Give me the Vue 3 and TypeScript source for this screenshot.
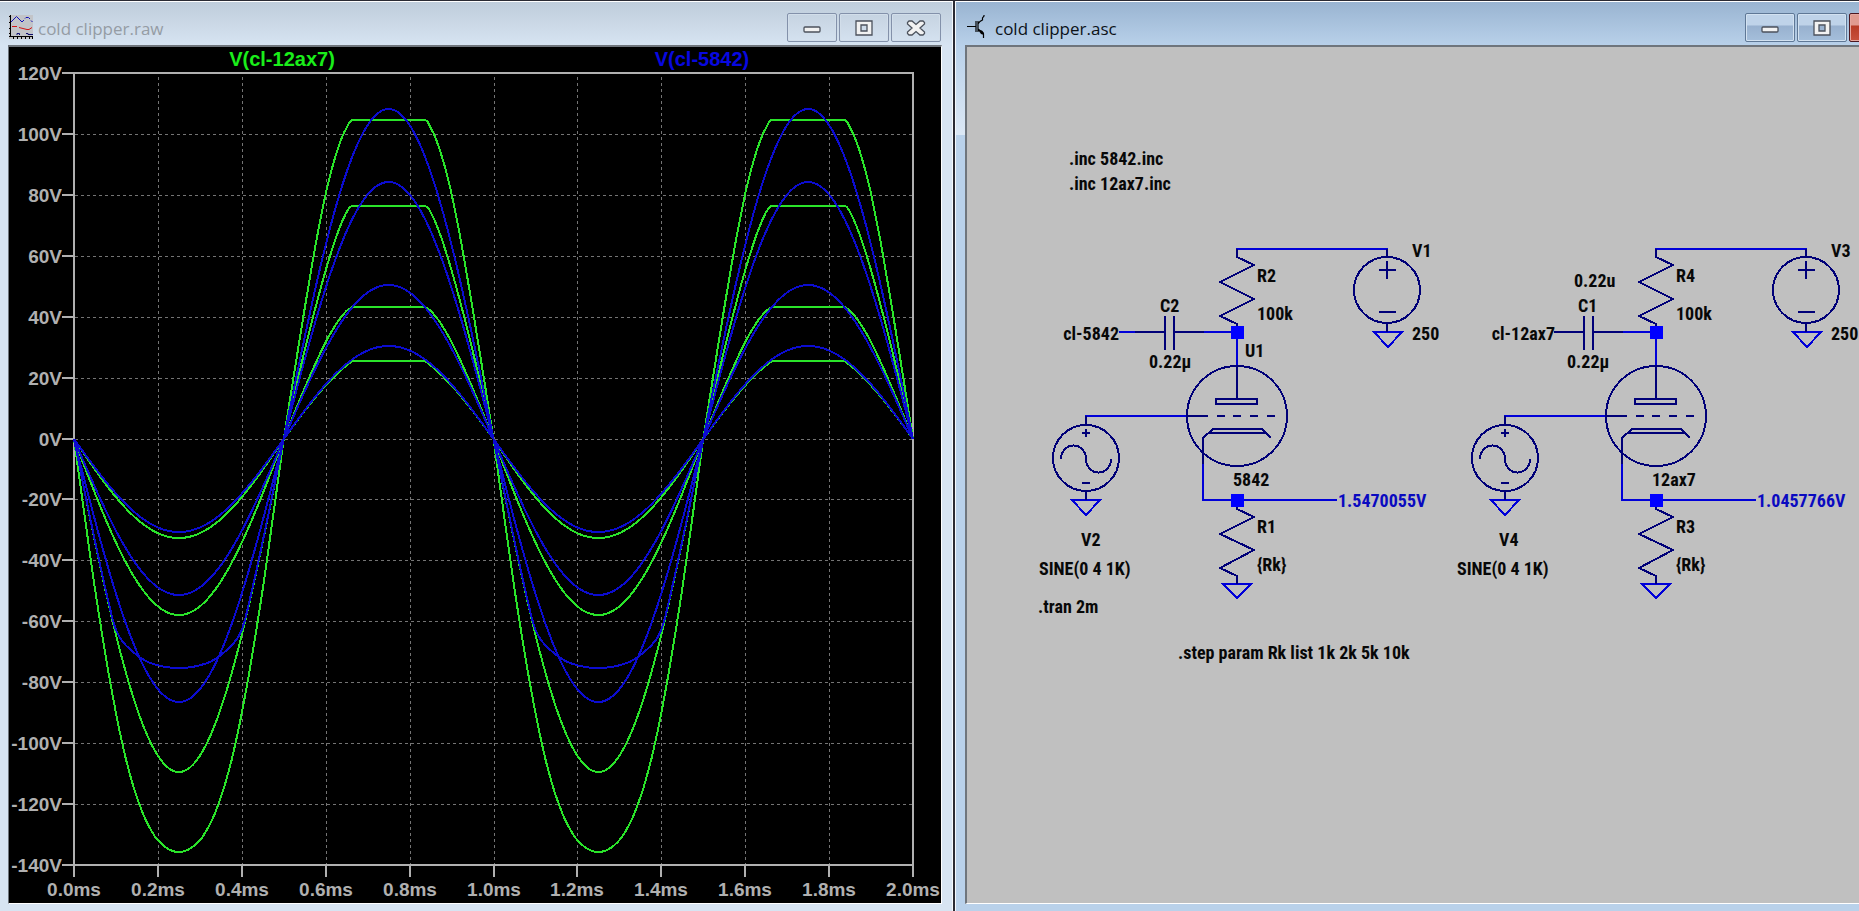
<script setup lang="ts">
type Knee = [number, number][]

interface Trace {
  net: 'triode' | 'pentode'
  positive: Knee
  negative: Knee
}

interface Label {
  text: string
  x: number
  y: number
  anchor?: 'start' | 'middle' | 'end'
}

interface Stage {
  id: string
  offset: number
  wireStart: number
  bias: string
  labels: Label[]
}

const plot = { left: 74, right: 913, top: 73, bottom: 865, zero: 439 }
const period = (plot.right - plot.left) / 2

// Each knee lists [ideal, actual] swing in plot units; the first ideal/actual
// slope holds from the origin and the last point is the full-scale swing.
const traces: Trace[] = [
  { net: 'triode', positive: [[78, 78], [91, 78]], negative: [[99, 99]] },
  { net: 'triode', positive: [[100, 100], [120, 118], [133, 128], [141, 132], [165, 132]], negative: [[176, 176]] },
  { net: 'triode', positive: [[172, 172], [205, 204], [222, 219], [232, 227], [240, 232], [245, 233], [287, 233]], negative: [[333, 333]] },
  {
    net: 'triode',
    positive: [[200, 199], [255, 250], [280, 270], [303, 287], [318, 297], [331, 305], [345, 312], [354, 317], [362, 319], [425, 319]],
    negative: [[150, 150], [200, 197], [240, 234], [275, 265], [300, 287], [340, 320], [380, 350], [420, 377], [455, 398], [485, 413]],
  },
  { net: 'pentode', positive: [[93, 93]], negative: [[93, 93]] },
  { net: 'pentode', positive: [[154, 154]], negative: [[156, 156]] },
  { net: 'pentode', positive: [[257, 257]], negative: [[263, 263]] },
  {
    net: 'pentode',
    positive: [[330, 330]],
    negative: [[180, 180], [194, 191], [210, 199], [230, 206], [252, 212], [274, 218], [295, 223], [312, 226], [330, 229]],
  },
]

function shape(value: number, knee: Knee): number {
  let previous: [number, number] = [0, 0]
  for (const point of knee) {
    if (value <= point[0]) {
      const share = (value - previous[0]) / (point[0] - previous[0])
      return previous[1] + share * (point[1] - previous[1])
    }
    previous = point
  }
  return previous[1]
}

function tracePoints(trace: Trace): string {
  const points: string[] = []
  for (let x = plot.left; x <= plot.right; x += 1) {
    const sine = -Math.sin(((x - plot.left) / period) * Math.PI * 2)
    const knee = sine >= 0 ? trace.positive : trace.negative
    const full = knee[knee.length - 1][0]
    const swing = shape(Math.abs(sine) * full, knee)
    const y = plot.zero - Math.sign(sine) * swing
    points.push(`${x},${y.toFixed(1)}`)
  }
  return points.join(' ')
}

const timeTicks = Array.from({ length: 11 }, (_, i) => ({
  text: `${(i * 0.2).toFixed(1)}ms`,
  x: Math.round(plot.left + (i * (plot.right - plot.left)) / 10),
}))

const voltTicks = Array.from({ length: 14 }, (_, i) => ({
  text: `${120 - i * 20}V`,
  y: Math.round(plot.top + (i * (plot.bottom - plot.top)) / 13),
}))

const directives: Label[] = [
  { text: '.inc 5842.inc', x: 1069, y: 165 },
  { text: '.inc 12ax7.inc', x: 1069, y: 190 },
  { text: '.tran 2m', x: 1038, y: 613 },
  { text: '.step param Rk list 1k 2k 5k 10k', x: 1178, y: 659 },
]

const stages: Stage[] = [
  {
    id: '5842',
    offset: 0,
    wireStart: 1119,
    bias: '1.5470055V',
    labels: [
      { text: 'V1', x: 1412, y: 257 },
      { text: 'R2', x: 1257, y: 282 },
      { text: '100k', x: 1257, y: 320 },
      { text: 'C2', x: 1160, y: 312 },
      { text: 'cl-5842', x: 1119, y: 340, anchor: 'end' },
      { text: '0.22µ', x: 1149, y: 368 },
      { text: 'U1', x: 1245, y: 357 },
      { text: '5842', x: 1233, y: 486 },
      { text: 'R1', x: 1257, y: 533 },
      { text: '{Rk}', x: 1257, y: 571 },
      { text: 'V2', x: 1081, y: 546 },
      { text: 'SINE(0 4 1K)', x: 1039, y: 575 },
      { text: '250', x: 1412, y: 340 },
    ],
  },
  {
    id: '12ax7',
    offset: 419,
    wireStart: 1136,
    bias: '1.0457766V',
    labels: [
      { text: 'V3', x: 1412, y: 257 },
      { text: 'R4', x: 1257, y: 282 },
      { text: '100k', x: 1257, y: 320 },
      { text: '0.22u', x: 1155, y: 287 },
      { text: 'C1', x: 1159, y: 312 },
      { text: 'cl-12ax7', x: 1136, y: 340, anchor: 'end' },
      { text: '0.22µ', x: 1148, y: 368 },
      { text: '12ax7', x: 1233, y: 486 },
      { text: 'R3', x: 1257, y: 533 },
      { text: '{Rk}', x: 1257, y: 571 },
      { text: 'V4', x: 1080, y: 546 },
      { text: 'SINE(0 4 1K)', x: 1038, y: 575 },
      { text: '250', x: 1412, y: 340 },
    ],
  },
]
</script>

<template>
  <main class="desktop">
    <section class="window inactive" aria-labelledby="raw-title">
      <header class="titlebar">
        <svg class="app-icon" viewBox="0 0 24 24" aria-hidden="true">
          <rect width="24" height="24" fill="#c2c4c8" />
          <path d="M1.5 0V22M0 21.5H24M0 1.5H2M0 7.5H2M0 13.5H2M0 18.5H2M4.5 22V24M8.5 22V24M12.5 22V24M16.5 22V24M20.5 22V24M23.5 22V24" stroke="#000" stroke-width="1" fill="none" />
          <path d="M2 7L7.500 1.500L13 7L15 5M16 3.500L17 2.500H19.500L21 4M22 5.500L23.500 7" stroke="#1010b8" stroke-width="1" fill="none" />
          <path d="M3 11.500H8M10 12.500L14 13.500L18 14.500H20L23 12.500" stroke="#d01818" stroke-width="1" fill="none" />
          <path d="M8 20V18.500H10.500V20M17 18.500H19V19.500H24" stroke="#101070" stroke-width="1" fill="none" />
        </svg>
        <h1 id="raw-title" class="title">cold clipper.raw</h1>
        <div class="controls">
          <button type="button" aria-label="Minimize">
            <svg viewBox="0 0 20 18"><rect x="2" y="8" width="16" height="5" rx="1" class="glyph" /></svg>
          </button>
          <button type="button" aria-label="Maximize">
            <svg viewBox="0 0 20 18"><path d="M2 2H18V16H2ZM7 6V12H13V6Z" fill-rule="evenodd" class="glyph" /></svg>
          </button>
          <button type="button" aria-label="Close">
            <svg viewBox="0 0 20 18"><path d="M3 2H6L10 5.500L14 2H17L18.500 3.500V5L14 9L18.500 13V14.500L17 16H14L10 12.500L6 16H3L1.500 14.500V13L6 9L1.500 5V3.500Z" class="glyph" /></svg>
          </button>
        </div>
      </header>
      <div class="client plot">
        <svg class="canvas" viewBox="9 47 932 856" preserveAspectRatio="xMinYMin meet" role="img" aria-label="Waveform plot">
          <g class="grid">
            <path v-for="tick in timeTicks.slice(1, -1)" :key="tick.text" :d="`M${tick.x}.5 77V864`" />
            <path v-for="tick in voltTicks.slice(1, -1)" :key="tick.text" :d="`M75 ${tick.y}.5H912`" />
          </g>
          <g class="axis">
            <rect :x="plot.left" :y="plot.top" :width="plot.right - plot.left" :height="plot.bottom - plot.top" />
            <path v-for="tick in voltTicks" :key="tick.text" :d="`M62 ${tick.y}H74`" />
            <path v-for="tick in timeTicks" :key="tick.text" :d="`M${tick.x} 865V877`" />
          </g>
          <polyline v-for="(trace, i) in traces" :key="i" :class="['trace', trace.net]" :points="tracePoints(trace)" />
          <g class="axis-text">
            <text v-for="tick in voltTicks" :key="tick.text" x="62" :y="tick.y + 7" text-anchor="end">{{ tick.text }}</text>
            <text v-for="tick in timeTicks" :key="tick.text" :x="tick.x" y="896" text-anchor="middle">{{ tick.text }}</text>
          </g>
          <text class="net-name triode" x="282" y="66" text-anchor="middle">V(cl-12ax7)</text>
          <text class="net-name pentode" x="702" y="66" text-anchor="middle">V(cl-5842)</text>
        </svg>
      </div>
    </section>

    <section class="window active" aria-labelledby="asc-title">
      <header class="titlebar">
        <svg class="app-icon" viewBox="0 0 24 24" aria-hidden="true">
          <path d="M1 11.500H10M10 6V17M12 6V17M12 9L14 6.500L16.500 5V3L18 1V0M12 14L16 17L17.500 19V23" stroke="#000" stroke-width="1.200" fill="none" />
          <path d="M12.500 15.500H16L18 18V20L15 19Z" fill="#000" />
        </svg>
        <h2 id="asc-title" class="title">cold clipper.asc</h2>
        <div class="controls">
          <button type="button" aria-label="Minimize">
            <svg viewBox="0 0 20 18"><rect x="2" y="8" width="16" height="5" rx="1" class="glyph" /></svg>
          </button>
          <button type="button" aria-label="Maximize">
            <svg viewBox="0 0 20 18"><path d="M2 2H18V16H2ZM7 6V12H13V6Z" fill-rule="evenodd" class="glyph" /></svg>
          </button>
          <button type="button" class="close" aria-label="Close"></button>
        </div>
      </header>
      <div class="client schematic">
        <svg class="canvas" viewBox="967 47 892 856" preserveAspectRatio="xMinYMin meet" role="img" aria-label="Schematic">
          <g v-for="stage in stages" :key="stage.id" :transform="`translate(${stage.offset} 0)`">
            <g class="wire">
              <path d="M1237 257V249H1387V257" />
              <path :d="`M${stage.wireStart} 332H1165`" />
              <path d="M1174 332H1237V367" />
              <path d="M1086 425V416H1187" />
              <path d="M1203 464V500H1337" />
              <path d="M1223 584H1251L1237 598Z" />
              <path d="M1374 332H1402L1388 347Z" />
              <path d="M1072 500H1100L1086 515Z" />
            </g>
            <g class="part">
              <path d="M1237 249V257L1254 265L1220 282L1254 299L1220 316L1237 324V332" />
              <path d="M1237 500V509L1254 517L1220 534L1254 550L1220 568L1237 576V584" />
              <path d="M1135 332H1165M1165 316V350M1174 316V350M1174 332H1204" />
              <circle cx="1237" cy="416" r="50" />
              <path d="M1237 367V399M1216 399H1257V404H1216Z" />
              <path d="M1187 416H1208M1217 416H1225M1233 416H1241M1250 416H1258M1267 416H1275" />
              <path d="M1203 464V438L1213 429H1262L1271 438M1208 433H1266" />
              <circle cx="1387" cy="290" r="33" />
              <path d="M1387 249V257M1379 270H1396M1387 261V279M1379 312H1396M1387 323V332" />
              <circle cx="1086" cy="458" r="33" />
              <path d="M1086 416V425M1082 433H1090M1086 429V437M1082 483H1090M1086 491V500" />
              <path d="M1061 459A12 13 0 0 1 1086 459A12 13 0 0 0 1111 459" />
            </g>
            <rect class="node" x="1231" y="326" width="13" height="13" />
            <rect class="node" x="1231" y="494" width="13" height="13" />
            <g class="label">
              <text v-for="label in stage.labels" :key="label.text + label.y" :x="label.x" :y="label.y" :text-anchor="label.anchor ?? 'start'">{{ label.text }}</text>
              <text class="bias" x="1338" y="507">{{ stage.bias }}</text>
            </g>
          </g>
          <g class="label">
            <text v-for="line in directives" :key="line.text" :x="line.x" :y="line.y">{{ line.text }}</text>
          </g>
        </svg>
      </div>
    </section>
  </main>
</template>

<style>
body {
  margin: 0;
  overflow: hidden;
}
</style>

<style scoped>
.desktop {
  display: grid;
  grid-template-columns: minmax(0, 953fr) minmax(0, 904fr);
  gap: 2px;
  height: 100vh;
  padding-top: 1px;
  box-sizing: border-box;
  background: #2a2a33;
}
.window {
  display: flex;
  flex-direction: column;
  box-sizing: border-box;
  min-width: 0;
  border-top: 1px solid #fff;
}
.inactive {
  padding: 0 10px 7px 8px;
  border-right: 1px solid #f4f8fc;
  background: linear-gradient(#bfcddb, #d7e4f2 44px);
}
.active {
  padding: 0 0 7px 9px;
  border-left: 1px solid #f4f8fc;
  background:
    linear-gradient(#b9d1ea, #dce8f5) 0 44px / 9px 89px no-repeat,
    linear-gradient(#99b4d1, #b9d1ea 44px);
}
.titlebar {
  display: flex;
  align-items: flex-start;
  height: 43px;
  flex: none;
}
.app-icon {
  width: 24px;
  height: 24px;
  margin-top: 13px;
  margin-left: 1px;
}
.title {
  flex: 1;
  margin: 13px 0 0 5px;
  font: 400 17px/27px "Open Sans", "Noto Sans", sans-serif;
  color: #959ca4;
}
.active .title {
  color: #0c1218;
}
.controls {
  display: flex;
  gap: 2px;
  margin: 11px 1px 0 0;
}
.active .controls {
  width: 114px;
  margin-right: 0;
  overflow: hidden;
}
.controls button {
  display: grid;
  place-items: center;
  flex: none;
  box-sizing: border-box;
  width: 50px;
  height: 29px;
  padding: 0;
  border: 1px solid #8391aa;
  border-radius: 2px;
  background: transparent;
  box-shadow: inset 0 0 0 1px #d2deea;
}
.active .controls button {
  border-color: #5f7896;
  background: linear-gradient(#bfd3e9 40%, #98b1cf 45%, #a5bfdb);
  box-shadow: inset 0 0 0 1px #d3e2f1;
}
.active .controls .close {
  border-color: #4c1720;
  background: linear-gradient(#e09b90 40%, #b83c26 45%, #c8513c);
  box-shadow: inset 0 0 0 1px #e5a79e;
}
.controls svg {
  width: 20px;
  height: 18px;
}
.glyph {
  fill: #f2f2f2;
  stroke: #4c525c;
  stroke-width: 1.3;
}
.client {
  flex: 1;
  min-height: 0;
  border: 1px solid #fff;
  border-top: 2px solid #6f757c;
  border-left-color: #6f757c;
}
.plot {
  background: #000;
}
.schematic {
  border-right: 0;
  border-left-width: 2px;
  background: #c0c0c0;
}
.canvas {
  display: block;
  width: 100%;
  height: 100%;
}
.grid path {
  fill: none;
  stroke: #747474;
  stroke-width: 1;
  stroke-dasharray: 3 3;
}
.axis rect,
.axis path {
  fill: none;
  stroke: #b0b0b0;
  stroke-width: 2;
}
.axis-text {
  font: bold 19px "Liberation Sans", Arial, sans-serif;
  fill: #b0b0b0;
}
.net-name {
  font: bold 20px "Liberation Sans", Arial, sans-serif;
}
.net-name.triode {
  fill: #1aee1a;
}
.net-name.pentode {
  fill: #0808e0;
}
.trace {
  fill: none;
  stroke-width: 2;
  shape-rendering: crispEdges;
}
.trace.triode {
  stroke: #2ae42a;
}
.trace.pentode {
  stroke: #0c0cd0;
}
.wire path {
  fill: none;
  stroke: #0000d8;
  stroke-width: 2;
  shape-rendering: crispEdges;
}
.part path,
.part circle {
  fill: none;
  stroke: #000078;
  stroke-width: 2;
  shape-rendering: crispEdges;
}
.node {
  fill: #0000ff;
}
.label {
  font: bold 18px "Liberation Sans Narrow", "Arial Narrow", "Roboto Condensed", "Liberation Sans", sans-serif;
  fill: #080808;
}
.label .bias {
  fill: #0a0ac0;
}
</style>
